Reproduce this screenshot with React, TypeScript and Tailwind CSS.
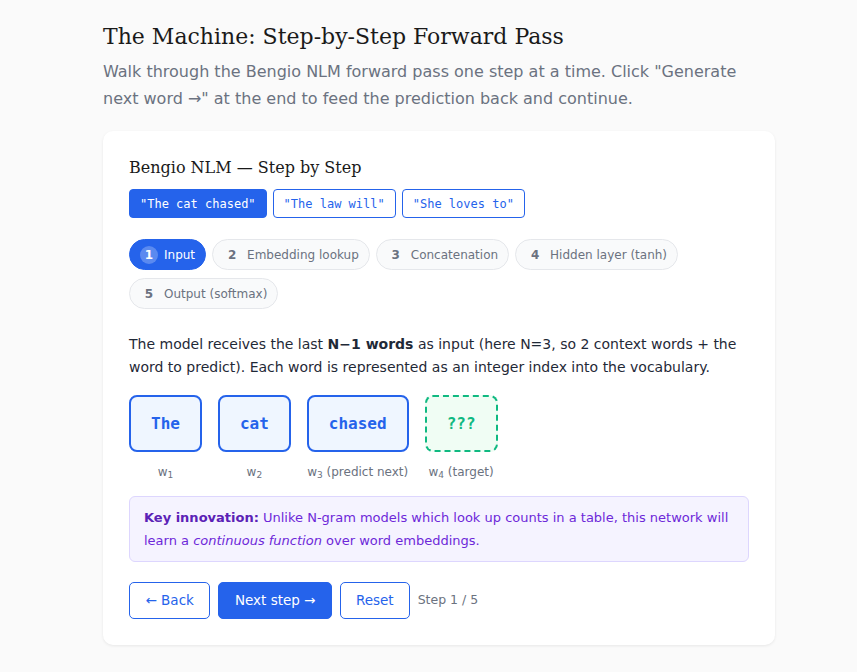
import React from "react";

export default function App() {
  const steps = ["Input", "Embedding lookup", "Concatenation", "Hidden layer (tanh)", "Output (softmax)"];
  const words = [
    { w: "The", sub: "1", extra: "" },
    { w: "cat", sub: "2", extra: "" },
    { w: "chased", sub: "3", extra: " (predict next)" },
  ];
  return (
    <div className="min-h-[672px] w-full bg-[#fafafa] font-['DejaVu_Sans',sans-serif]">
      <div className="ml-[103px] w-[672px] pt-[22px] pb-[27px]">
        <h1 className="font-['DejaVu_Serif',serif] text-[22px] leading-[30px] text-[#1a1a1a]">
          The Machine: Step-by-Step Forward Pass
        </h1>
        <p className="mt-[6px] text-[16px] leading-[27px] text-[#6b7280]">
          Walk through the Bengio NLM forward pass one step at a time. Click "Generate next word →" at the end to feed the prediction back and continue.
        </p>
        <div className="mt-[19px] rounded-[10px] bg-white px-[26px] pt-[25px] pb-[26px] shadow-[0_1px_3px_rgba(0,0,0,0.08)]">
          <h2 className="font-['DejaVu_Serif',serif] text-[16px] leading-[24px] text-[#1a1a1a]">
            Bengio NLM — Step by Step
          </h2>
          <div className="mt-[9px] flex gap-[6px] font-['DejaVu_Sans_Mono',monospace] text-[12px]">
            <button className="h-[29px] rounded-[4px] border border-[#2563eb] bg-[#2563eb] px-[10px] text-white">"The cat chased"</button>
            <button className="h-[29px] rounded-[4px] border border-[#2563eb] bg-white px-[10px] text-[#2563eb]">"The law will"</button>
            <button className="h-[29px] rounded-[4px] border border-[#2563eb] bg-white px-[10px] text-[#2563eb]">"She loves to"</button>
          </div>
          <div className="mt-[21px] flex flex-wrap gap-x-[6px] gap-y-[8px] text-[12px]">
            {steps.map((s, i) =>
              i === 0 ? (
                <div key={s} className="flex h-[31px] items-center gap-[6px] rounded-full border border-[#2563eb] bg-[#2563eb] pl-[10px] pr-[10px] text-white">
                  <span className="flex h-[18px] w-[18px] items-center justify-center rounded-full bg-white/25 text-[12px] font-bold">1</span>
                  {s}
                </div>
              ) : (
                <div key={s} className="flex h-[31px] items-center gap-[6px] rounded-full border border-[#e5e7eb] bg-[#f9fafb] pl-[10px] pr-[10px] text-[#6b7280]">
                  <span className="flex h-[18px] w-[18px] items-center justify-center text-[12px] font-bold text-[#6b7280]">{i + 1}</span>
                  {s}
                </div>
              )
            )}
          </div>
          <p className="mt-[24px] text-[14px] leading-[23px] text-[#1f2937]">
            The model receives the last <b>N−1 words</b> as input (here N=3, so 2 context words + the word to predict). Each word is represented as an integer index into the vocabulary.
          </p>
          <div className="mt-[16px] flex gap-[16px]">
            {words.map((x) => (
              <div key={x.w} className="flex flex-col items-center">
                <div className="flex h-[57px] items-center justify-center rounded-[8px] border-2 border-[#2563eb] bg-[#eff6ff] px-[20px] font-['DejaVu_Sans_Mono',monospace] text-[16px] font-bold text-[#2563eb]">
                  {x.w}
                </div>
                <div className="mt-[12px] text-[12px] leading-[16px] text-[#6b7280]">
                  w<sub className="text-[9px]">{x.sub}</sub>{x.extra}
                </div>
              </div>
            ))}
            <div className="flex flex-col items-center">
              <div className="flex h-[57px] w-[73px] items-center justify-center rounded-[8px] border-2 border-dashed border-[#10b981] bg-[#f0fdf4] font-['DejaVu_Sans_Mono',monospace] text-[16px] font-bold text-[#10b981]">
                ???
              </div>
              <div className="mt-[12px] text-[12px] leading-[16px] text-[#6b7280]">
                w<sub className="text-[9px]">4</sub> (target)
              </div>
            </div>
          </div>
          <div className="mt-[16px] rounded-[6px] border border-[#ddd6fe] bg-[#f5f3ff] px-[14px] py-[9px] text-[13px] leading-[23px] text-[#6d28d9]">
            <b className="text-[#5b21b6]">Key innovation:</b> Unlike N-gram models which look up counts in a table, this network will learn a <i>continuous function</i> over word embeddings.
          </div>
          <div className="mt-[20px] flex items-center gap-[8px] text-[13.5px]">
            <button className="h-[37px] rounded-[5px] border border-[#2563eb] bg-white px-[15.5px] text-[#2563eb]">← Back</button>
            <button className="h-[37px] rounded-[5px] border border-[#2563eb] bg-[#2563eb] px-[15.5px] text-white">Next step →</button>
            <button className="h-[37px] rounded-[5px] border border-[#2563eb] bg-white px-[15px] text-[#2563eb]">Reset</button>
            <span className="text-[12.5px] text-[#6b7280]">Step 1 / 5</span>
          </div>
        </div>
      </div>
    </div>
  );
}
